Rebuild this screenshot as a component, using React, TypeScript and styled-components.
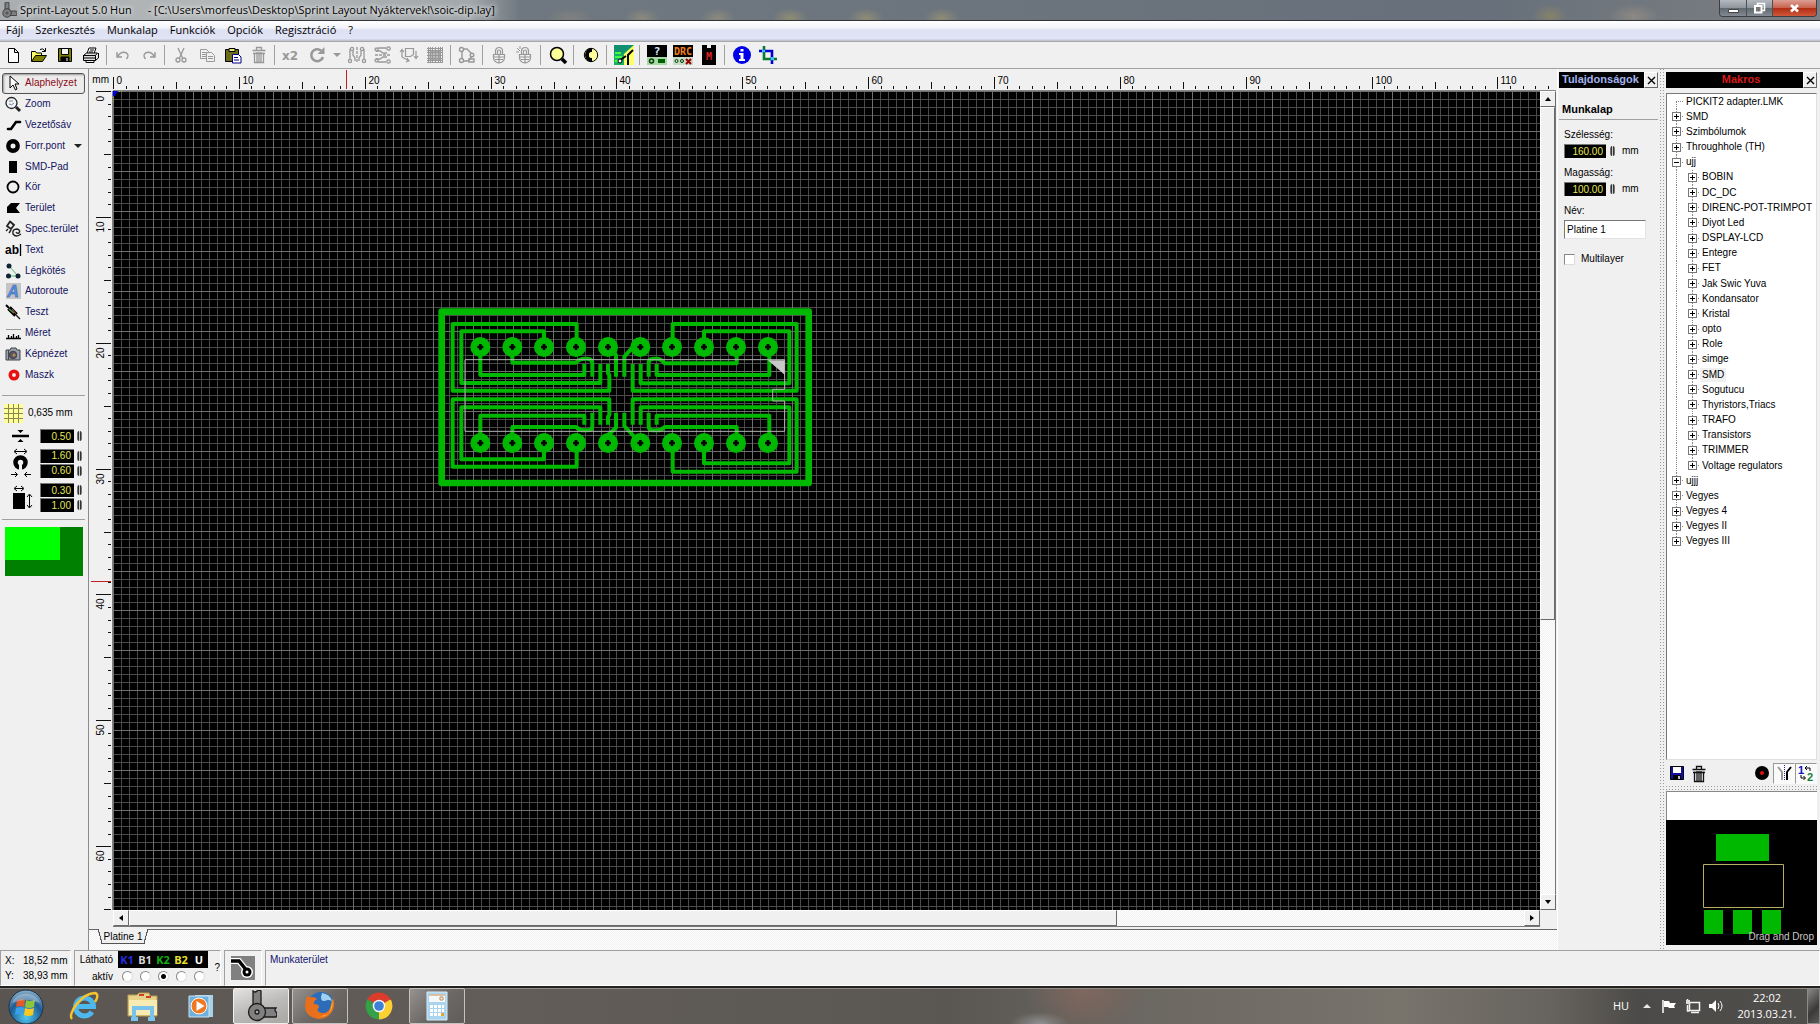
import React, { ReactNode, useState } from "react";
import styled, { createGlobalStyle, css } from "styled-components";

const ARIAL = '"Liberation Sans", sans-serif';
const SEGOE = '"Open Sans", sans-serif';

const FACE = "#f0f0f0";
const GREEN = "#00b800";
const DIM = "#989898";

const Global = createGlobalStyle`
  * { box-sizing: border-box; }
  html, body, #root { height: 100%; }
  body { margin: 0; overflow: hidden; background: ${FACE}; }
  button, input { font: inherit; color: inherit; margin: 0; padding: 0; }
  button { background: none; border: 0; white-space: nowrap; }
  ul { list-style: none; margin: 0; padding: 0; }
`;

const Page = styled.div`
  height: 100vh;
  display: flex;
  flex-direction: column;
  background: ${FACE};
  color: #000;
  font: 10px/16px ${ARIAL};
`;

/* ---------- window frame ---------- */

const TitleBar = styled.header`
  flex: none;
  height: 21px;
  display: flex;
  align-items: center;
  padding-left: 1px;
  border-bottom: 1px solid #30343a;
  background:
    radial-gradient(ellipse 24px 10px at 570px 18px, #80817f, transparent),
    radial-gradient(ellipse 18px 10px at 642px 18px, #8b8a7c, transparent),
    radial-gradient(ellipse 18px 10px at 718px 18px, #8b8a7c, transparent),
    radial-gradient(ellipse 18px 10px at 790px 18px, #8f8c74, transparent),
    radial-gradient(ellipse 18px 10px at 866px 18px, #8f8c74, transparent),
    radial-gradient(ellipse 18px 10px at 942px 18px, #8f8c74, transparent),
    radial-gradient(ellipse 18px 12px at 1550px 16px, #86836a, transparent),
    radial-gradient(ellipse 26px 12px at 1634px 16px, #8d8984, transparent),
    linear-gradient(90deg, #a9adaf 0, #b3b7b8 200px, #a2a8ab 470px, #6f7880 520px, #68717b 1500px, #7d7f82 1820px);
  font: 11px/16px ${SEGOE};
`;
const TitleText = styled.h1`
  flex: 1;
  display: flex;
  gap: 16px;
  margin: 0 0 0 3px;
  font: inherit;
  white-space: pre;
  text-shadow: 0 0 6px #fff, 0 0 4px #e8e8e8;
`;
const WindowButtons = styled.div`
  align-self: flex-start;
  display: flex;
  margin-right: 3px;
  border: 1px solid #3b3f45;
  border-top: 0;
  border-radius: 0 0 4px 4px;
  overflow: hidden;
`;
const WindowButton = styled.button<{ $close?: boolean }>`
  width: ${(p) => (p.$close ? 44 : 26)}px;
  height: 16px;
  display: grid;
  place-items: center;
  background: ${(p) =>
    p.$close
      ? "linear-gradient(#dba094, #c8604c 50%, #b02c12 51%, #d0583a)"
      : "linear-gradient(#b4b9bf, #8d949c 50%, #5f676f 51%, #838a91)"};
  & + & { border-left: 1px solid #4c5056; }
`;

const MenuBar = styled.nav`
  flex: none;
  height: 20px;
  display: flex;
  align-items: center;
  gap: 12px;
  padding: 0 0 2px 6px;
  background: linear-gradient(#fff, #f2f4fb 35%, #dee1f3 45%, #e0e4f5 88%, #b9bcc9);
  font: 11px/16px ${SEGOE};
`;

const ToolBar = styled.div`
  flex: none;
  height: 28px;
  display: flex;
  align-items: center;
  border-bottom: 1px solid #a0a0a0;
  border-top: 1px solid #a8a8a8;
`;
const ToolButton = styled.button<{ $w?: number }>`
  width: ${(p) => p.$w ?? 26}px;
  height: 24px;
  display: grid;
  place-items: center;
`;
const ToolSep = styled.span<{ $wide?: boolean }>`
  width: ${(p) => (p.$wide ? 7 : 6)}px;
  height: 20px;
  background: linear-gradient(#a0a0a0, #a0a0a0) 2px 0 / 1px 100% no-repeat;
`;

/* ---------- left column ---------- */

const Main = styled.main`
  flex: 1;
  min-height: 0;
  display: flex;
`;
const LeftPanel = styled.aside`
  flex: none;
  width: 89px;
  padding: 4px 3px 0 2px;
  border-right: 1px solid #8c8c8c;
`;
const ToolList = styled.div`
  height: 312px;
  display: grid;
  grid-auto-rows: 1fr;
`;
const ToolItem = styled.button<{ $on?: boolean }>`
  display: flex;
  align-items: center;
  gap: 3px;
  padding-left: 1px;
  color: ${(p) => (p.$on ? "#8c0a14" : "#12125e")};
  text-align: left;
  border: 1px solid transparent;
  border-radius: 3px;
  ${(p) =>
    p.$on &&
    css`
      border-color: #555;
      background: #ececec;
      box-shadow: inset 1px 1px 2px #999;
    `}
`;
const Divider = styled.hr<{ $tight?: boolean }>`
  margin: ${(p) => (p.$tight ? 7 : 10)}px 0 7px;
  border: 0;
  border-top: 1px solid #a0a0a0;
`;
const GridSize = styled.div`
  display: flex;
  align-items: center;
  gap: 5px;
  height: 20px;
  padding-left: 2px;
`;
const Sizes = styled.div`
  display: grid;
  gap: 5px;
  margin-top: 6px;
`;
const SizeGroup = styled.div`
  display: grid;
  grid-template-columns: 38px 1fr;
  align-items: center;
`;
const SizeFields = styled.div`
  display: grid;
  gap: 1px;
`;
const FieldRow = styled.label`
  display: flex;
  align-items: center;
  gap: 3px;
`;
const NumberField = styled.input<{ $w: number }>`
  width: ${(p) => p.$w}px;
  height: 14px;
  padding-right: 3px;
  border: 0;
  border-top: 1px solid #777;
  border-left: 1px solid #777;
  background: #000;
  color: #e6e65a;
  text-align: right;
`;
const Spin = styled.button`
  width: 5px;
  height: 10px;
  border-radius: 3px;
  background: linear-gradient(90deg, #999, #222 35%, #ccc 50%, #222 65%, #999);
`;
const Preview = styled.div`
  height: 49px;
  margin: 0 2px 0 3px;
  background: linear-gradient(#00ff00, #00ff00) 0 0 / 55px 33px no-repeat #008000;
`;

/* ---------- work area ---------- */

const WorkColumn = styled.section`
  flex: 1;
  min-width: 0;
  display: flex;
  flex-direction: column;
`;
const WorkGrid = styled.div`
  flex: 1;
  min-height: 0;
  display: grid;
  grid-template-columns: 24px minmax(0, 1fr) 16px;
  grid-template-rows: 22px minmax(0, 1fr) 17px;
  padding-right: 1px;
`;
const Unit = styled.span`
  line-height: 22px;
  text-align: right;
  padding-right: 4px;
`;
const TopRuler = styled.svg`
  grid-column: 2 / 4;
  width: 100%;
  height: 22px;
  display: block;
  border-bottom: 1px solid #888;
`;
const SideRuler = styled.svg`
  width: 24px;
  height: 100%;
  display: block;
  border-right: 1px solid #808088;
`;
const Board = styled.svg`
  width: 100%;
  height: 100%;
  display: block;
  background: #000;
`;
const hatch = css`
  background: repeating-conic-gradient(#fff 0 25%, ${FACE} 0 50%) 0 0 / 2px 2px;
`;
const ScrollBar = styled.div<{ $horizontal?: boolean }>`
  display: flex;
  flex-direction: ${(p) => (p.$horizontal ? "row" : "column")};
  ${hatch}
  ${(p) =>
    p.$horizontal
      ? css`
          grid-column: 2;
          border-bottom: 1px solid #777;
        `
      : css`
          border-right: 1px solid #777;
        `}
`;
const raised = css`
  background: ${FACE};
  border: 1px solid #fff;
  border-right-color: #696969;
  border-bottom-color: #696969;
`;
const ScrollButton = styled.button`
  flex: none;
  width: 16px;
  height: 16px;
  display: grid;
  place-items: center;
  ${raised}
`;
const Thumb = styled.div<{ $grow: number }>`
  flex: ${(p) => p.$grow} 1 0;
  ${raised}
`;
const Rest = styled.div<{ $grow: number }>`
  flex: ${(p) => p.$grow} 1 0;
`;
const TabStrip = styled.div`
  flex: none;
  height: 21px;
  margin-top: 2px;
  display: flex;
  ${hatch}
`;
const TabLine = styled.span<{ $grow?: boolean }>`
  width: 9px;
  flex: ${(p) => (p.$grow ? "1" : "none")};
  border-top: 1px solid #666;
`;
const Tab = styled.button`
  position: relative;
  height: 15px;
  width: 50px;
  background: ${FACE};
  border-bottom: 1px solid #555;
  line-height: 15px;
  &::before, &::after {
    content: "";
    position: absolute;
    top: 0;
    width: 4px;
    height: 15px;
  }
  &::before { left: 0; background: linear-gradient(75deg, #f7f7f7 44%, #555 45% 58%, ${FACE} 60%); }
  &::after { right: 0; background: linear-gradient(-75deg, #f7f7f7 44%, #555 45% 58%, ${FACE} 60%); }
`;

/* ---------- right panels ---------- */

const Properties = styled.aside`
  flex: none;
  width: 103px;
  padding: 3px 2px 0 1px;
  border-left: 1px solid #fff;
`;
const PanelHead = styled.div`
  display: flex;
  height: 16px;
`;
const PanelTitle = styled.h2<{ $color: string; $center?: boolean }>`
  flex: 1;
  margin: 0;
  padding-left: ${(p) => (p.$center ? 13 : 3)}px;
  background: #000;
  color: ${(p) => p.$color};
  font: bold 11px/15px ${ARIAL};
  text-align: ${(p) => (p.$center ? "center" : "left")};
`;
const CloseButton = styled.button`
  width: 14px;
  display: grid;
  place-items: center;
  ${raised}
`;
const Section = styled.h3`
  margin: 13px 0 7px;
  padding: 0 0 1px 3px;
  border-bottom: 1px solid #a0a0a0;
  font: bold 11px/17px ${ARIAL};
`;
const Prop = styled.div`
  display: flex;
  flex-direction: column;
  padding-left: 5px;
  margin-bottom: 6px;
`;
const PropLine = styled.div`
  display: flex;
  align-items: center;
  gap: 4px;
  height: 16px;
`;
const Mm = styled.span`
  padding-left: 3px;
`;
const NameField = styled.input`
  width: 82px;
  height: 19px;
  margin-top: 1px;
  padding-left: 2px;
  border: 1px solid #777;
  border-right-color: #e4e4e4;
  border-bottom-color: #e4e4e4;
  background: #fff;
`;
const CheckLabel = styled.label`
  display: flex;
  align-items: center;
  gap: 6px;
  margin: 12px 0 0 5px;
`;
const Check = styled.input`
  appearance: none;
  width: 11px;
  height: 11px;
  border: 1px solid #888;
  border-right-color: #ddd;
  border-bottom-color: #ddd;
  background: #fff;
`;
const dots = "conic-gradient(at 1px 1px, transparent 75%, #9a9a9a 75%)";
const Grip = styled.div`
  flex: none;
  width: 5px;
  margin-right: 1px;
  background: ${dots} 0 0 / 3px 3px;
`;
const Macros = styled.aside`
  flex: none;
  width: 154px;
  padding: 3px 3px 0 0;
  display: flex;
  flex-direction: column;
`;
const TreeBox = styled.div`
  flex: 1;
  min-height: 0;
  margin-top: 5px;
  padding-left: 1px;
  overflow: hidden;
  background: #fff;
  border: 1px solid #777;
  border-right-color: #e0e0e0;
  border-bottom-color: #e0e0e0;
`;
const Tree = styled.ul`
  height: 455px;
  display: grid;
  grid-auto-rows: 1fr;
`;
const TreeRow = styled.li`
  display: flex;
  align-items: center;
  min-height: 0;
  white-space: nowrap;
`;
const vLine = "repeating-linear-gradient(#888 0 1px, transparent 1px 2px)";
const hLine = "repeating-linear-gradient(90deg, #888 0 1px, transparent 1px 2px)";
const Cell = styled.span<{ $v: string; $h?: boolean }>`
  width: 16px;
  height: 100%;
  display: grid;
  place-items: center;
  background:
    ${vLine} 8px ${(p) => (p.$v === "bottom" ? "100%" : "0")} / 1px
      ${(p) => (p.$v === "full" ? "100%" : "50%")} no-repeat,
    ${hLine} 8px 50% / ${(p) => (p.$h ? 8 : 0)}px 1px no-repeat;
`;
const Expander = styled.button`
  width: 9px;
  height: 9px;
  display: grid;
  place-items: center;
  border: 1px solid #777;
  background: #fff;
`;
const TreeName = styled.span<{ $marked?: boolean }>`
  padding: 0 2px;
  line-height: 14px;
  background: ${(p) => (p.$marked ? "#f0f0f0" : "transparent")};
`;
const MacroTools = styled.div`
  height: 26px;
  display: flex;
  align-items: center;
`;
const MacroButton = styled.button<{ $down?: boolean }>`
  width: 22px;
  height: 21px;
  display: grid;
  place-items: center;
  border: 1px solid ${(p) => (p.$down ? "#999" : "transparent")};
  border-right-color: transparent;
  border-bottom-color: transparent;
  background: ${(p) => (p.$down ? "#fafafa" : "none")};
`;
const Spacer = styled.span`
  flex: 1;
`;
const HGrip = styled.div`
  height: 5px;
  background: ${dots} 0 0 / 3px 3px;
`;
const MacroInfo = styled.div`
  height: 29px;
  background: #fff;
  border-top: 1px solid #888;
  border-left: 1px solid #888;
`;
const MacroView = styled.div`
  position: relative;
  height: 125px;
  margin-bottom: 5px;
  background: #000;
  overflow: hidden;
`;
const DragHint = styled.span`
  position: absolute;
  right: 3px;
  bottom: 0;
  color: #c8c8c8;
`;

/* ---------- status bar ---------- */

const Status = styled.footer`
  flex: none;
  height: 36px;
  display: flex;
  gap: 3px;
  background: ${FACE};
`;
const StatusPane = styled.div<{ $w?: number }>`
  ${(p) => (p.$w ? `flex: none; width: ${p.$w}px;` : "flex: 1;")}
  display: flex;
  align-items: center;
  border: 1px solid #fff;
  border-top-color: #a0a0a0;
  border-left-color: #a0a0a0;
`;
const Coords = styled.dl`
  display: grid;
  grid-template-columns: 18px 1fr;
  margin: 0 0 0 4px;
  line-height: 15px;
  white-space: nowrap;
  dd { margin: 0; }
`;
const Layers = styled.div`
  display: grid;
  grid-template-columns: 43px repeat(5, 18px) 12px;
  grid-template-rows: 17px 17px;
  align-items: center;
`;
const LayersLabel = styled.span`
  padding-right: 5px;
  text-align: right;
`;
const LayerButton = styled.button<{ $c: string }>`
  height: 17px;
  background: #000;
  color: ${(p) => p.$c};
  font: bold 11px/16px ${SEGOE};
`;
const Radio = styled.input`
  appearance: none;
  justify-self: center;
  width: 11px;
  height: 11px;
  border: 1px solid #888;
  border-right-color: #ddd;
  border-bottom-color: #ddd;
  border-radius: 50%;
  background: #fff;
  &:checked { background: radial-gradient(circle, #000 2px, #fff 3px); }
`;
const Help = styled.button`
  grid-column: 7;
  grid-row: 1 / 3;
  text-align: right;
`;
const Hint = styled.p`
  align-self: flex-start;
  margin: 1px 0 0 4px;
  color: #14146e;
`;

/* ---------- desktop task bar ---------- */

const TaskBar = styled.div`
  flex: none;
  height: 38px;
  display: flex;
  align-items: center;
  border-top: 2px solid #24211f;
  background:
    radial-gradient(ellipse 60px 46px at 1085px 0, #80675e, transparent),
    radial-gradient(ellipse 30px 12px at 1040px 36px, #8f9192, transparent),
    linear-gradient(90deg, #5a5550, #625d58 500px, #5a5753 950px, #6c6862 1150px, #78736b 1400px, #67645f 1550px, #4c4a48 1640px, #514f4c);
  color: #fff;
  font: 11px/16px ${SEGOE};
  box-shadow: inset 0 1px #8e8b87;
`;
const TaskButton = styled.button<{ $w: number; $open?: boolean; $active?: boolean }>`
  width: ${(p) => p.$w}px;
  height: 36px;
  margin-right: ${(p) => (p.$active ? 3 : 0)}px;
  display: grid;
  place-items: center;
  border: 1px solid transparent;
  border-radius: 2px;
  ${(p) =>
    p.$open &&
    css`
      border-color: #c4c2bf;
      background: linear-gradient(135deg, #95928f, #6c6966 50%, #5f5c59);
    `}
  ${(p) =>
    p.$active &&
    css`
      border-color: #efefef;
      background: linear-gradient(160deg, #e4e3e2, #bdbbb9 50%, #a9a7a4);
    `}
`;
const Tray = styled.div`
  margin-left: auto;
  display: flex;
  align-items: center;
  height: 36px;
`;
const TrayButton = styled.button<{ $w: number }>`
  width: ${(p) => p.$w}px;
  display: grid;
  place-items: center;
`;
const Clock = styled.time`
  width: 80px;
  text-align: center;
`;
const ShowDesktop = styled.button`
  width: 13px;
  height: 36px;
  border: 1px solid #8d8b89;
  background: linear-gradient(135deg, #8a8886, #3b3a38 60%, #5c5a58);
`;

/* ---------- drawings ---------- */

const Svg = ({ s = 20, w, h, children }: { s?: number; w?: number; h?: number; children: ReactNode }) => (
  <svg width={w ?? s} height={h ?? s} viewBox={`0 0 ${w ?? s} ${h ?? s}`} fill="none" aria-hidden="true">
    {children}
  </svg>
);

const Trash = ({ c }: { c: string }) => (
  <g stroke={c} strokeWidth="1.3">
    <path d="M3.500 5.500h13M7.500 5V2.500h5v2.500M5.500 7.500v10h9v-10M4 8.500h12" />
    <path d="M8 7v10M10 7v10M12 7v10" />
  </g>
);
const Lock = () => (
  <g stroke={DIM} strokeWidth="1.2">
    <path d="M6.500 9V6a3.500 3.500 0 0 1 7 0v3M8.500 9V6.500a1.500 1.500 0 0 1 3 0V9" />
    <path d="M4.500 9.500h11v3a5.500 5.500 0 0 1-11 0zM5 12h10M6 14.500h8M10 10v8" />
  </g>
);

const toolIcons: Record<string, ReactNode> = {
  new: <path d="M5.500 3.500h6l4 4v10h-10zM11.500 3.500v4h4" fill="#fff" stroke="#000" />,
  open: (
    <g stroke="#000">
      <path d="M2.500 16V6.500h4l1 1.500h5v3" fill="#ffff66" />
      <path d="M2.500 16.500l4-6h11l-4 6z" fill="#808000" />
      <path d="M11 4.500q3-2 5 1.500M16.500 3v3.500H13" />
    </g>
  ),
  save: (
    <g stroke="#000">
      <path d="M3.500 3.500h13v13h-13z" fill="#808000" />
      <path d="M6.500 3.500h7v6h-7z" fill="#f4f4f4" />
      <path d="M6 12h8v4.500H6z" fill="#000" />
      <path d="M12 13v3" stroke="#fff" />
    </g>
  ),
  print: (
    <g stroke="#000">
      <path d="M6 8.500l2-5.500h7l-2 5.500" fill="#fff" />
      <path d="M2.500 10.500l3-2.500h11l-2 2.500zM2.500 10.500h12v5h-12zM14.500 15.500l3-2.500V8" fill="#ddd" />
      <path d="M3 13h11M5 16v1.500h8V16M9 5h4M8 7h4" />
    </g>
  ),
  undo: <path d="M4 7v5h5M4.500 11.500q4-6 9-3.500 3 2.500 0 6" stroke={DIM} strokeWidth="1.400" />,
  redo: <path d="M16 7v5h-5M15.500 11.500q-4-6-9-3.500-3 2.500 0 6" stroke={DIM} strokeWidth="1.400" />,
  cut: (
    <g stroke={DIM} strokeWidth="1.300">
      <path d="M7 3l4.500 10M13 3L8.500 13" />
      <circle cx="7" cy="15" r="2" />
      <circle cx="13" cy="15" r="2" />
    </g>
  ),
  copy: (
    <g stroke={DIM}>
      <path d="M3.500 4.500h6l2 2v7h-8z" fill={FACE} />
      <path d="M9.500 7.500h5l3 3v6h-8z" fill={FACE} />
      <path d="M5 7.500h4M5 9.500h4M5 11.500h4M11 11.500h5M11 13.500h5" />
    </g>
  ),
  paste: (
    <g stroke="#000">
      <path d="M2.500 4.500h13v12h-13z" fill="#6b6b1e" />
      <path d="M6 3.500h6v3H6z" fill="#e8e87a" />
      <path d="M9.500 9.500h6l2.500 2.500v6H9.500z" fill="#fff" stroke="#000080" />
      <path d="M11 12.500h4M11 15h5" stroke="#000080" />
    </g>
  ),
  trash: <Trash c={DIM} />,
  x2: (
    <text x="1" y="15" fontFamily="DejaVu Sans" fontWeight="bold" fontSize="12" fill={DIM}>
      x2
    </text>
  ),
  rotate: (
    <g>
      <path d="M14 5.500A6 6 0 1 0 16 12" stroke={DIM} strokeWidth="2.600" />
      <path d="M17.500 2v7h-7z" fill={DIM} />
    </g>
  ),
  mirrorH: (
    <g stroke={DIM} strokeWidth="1.300">
      <path d="M10 2v16" strokeDasharray="3 1" />
      <path d="M3 4v4M3 8v7M6 6v4l2 3v3M17 4v4M17 8v7M14 6v4l-2 3v3" />
      <circle cx="3" cy="16" r="1.600" />
      <circle cx="17" cy="16" r="1.600" />
      <circle cx="5" cy="4" r="1.600" />
      <circle cx="15" cy="4" r="1.600" />
    </g>
  ),
  mirrorV: (
    <g stroke={DIM} strokeWidth="1.300">
      <path d="M2 10h16" strokeDasharray="3 1" />
      <path d="M5 3h8M3 6h4l3 2h4M5 17h8M3 14h4l3-2h4" />
      <circle cx="15.500" cy="3.500" r="1.700" />
      <circle cx="15.500" cy="16.500" r="1.700" />
      <circle cx="3.500" cy="4.500" r="1.500" />
      <circle cx="3.500" cy="15.500" r="1.500" />
    </g>
  ),
  swap: (
    <g stroke={DIM} strokeWidth="1.200">
      <path d="M6.500 3.500h8v6l-3 2h-5z" />
      <path d="M1 7l2-2.500L5 7M3 5v7l7 4M19 11l-2 2.500L15 11M17 13V6M8 13l2 3-3 1" />
    </g>
  ),
  raster: (
    <g stroke={DIM}>
      <path d="M2 3.500h16M2 5.500h16M2 7.500h16M2 10.500h16M2 13.500h16M2 15.500h16M2 17.500h16M3.500 2v16M5.500 2v16M7.500 2v16M10.500 2v16M13.500 2v16M15.500 2v16M17.500 2v16" />
      <path d="M5 6h10v9H5z" fill={DIM} fillOpacity=".6" />
    </g>
  ),
  net: (
    <g stroke={DIM} strokeWidth="1.400">
      <path d="M5 4h5l6 6-5 6H5M5 4v12" />
      <circle cx="4.500" cy="4.500" r="2" fill={FACE} />
      <circle cx="4.500" cy="15.500" r="2" fill={FACE} />
      <circle cx="15" cy="10" r="1.800" fill={FACE} />
      <path d="M12 14h5v3h-5z" />
    </g>
  ),
  lock: <Lock />,
  unlock: (
    <g>
      <Lock />
      <path d="M2 3l3 3M5 1v3M1 7h3" stroke={DIM} />
    </g>
  ),
  zoom: (
    <g stroke="#000">
      <circle cx="9" cy="9" r="6.500" fill="#ffff99" strokeWidth="1.500" />
      <path d="M14 14l4 4" strokeWidth="3.500" />
    </g>
  ),
  contrast: (
    <g>
      <circle cx="10" cy="10" r="6.700" fill="#ffff99" stroke="#000" strokeWidth="1" />
      <path d="M11 3a7 7 0 1 0 0 14v-4a3 3 0 0 1 0-6z" fill="#000" />
      <path d="M11 7a3 3 0 0 0 0 6z" fill="#ffff99" />
    </g>
  ),
  photo: (
    <g>
      <path d="M0 0h20v20H0z" fill="#18b060" />
      <path d="M0 0h20L8 9H0z" fill="#109070" />
      <path d="M10 20V9L20 0v20z" fill="#ffff66" />
      <path d="M1 8h6M1 12h7M1 16h5" stroke="#40ff40" strokeWidth="2" />
      <path d="M19 5l-5 5v10M5 16l7-5" stroke="#000" strokeWidth="2" />
      <circle cx="6" cy="16" r="2" fill="#fff" stroke="#000" />
    </g>
  ),
  test: (
    <g>
      <path d="M0 0h20v12H0z" fill="#000" />
      <path d="M0 12h20v8H0z" fill="#a8d8a8" />
      <text x="10" y="10" textAnchor="middle" fontFamily="DejaVu Sans Mono" fontWeight="bold" fontSize="11" fill="#d8ecff">?</text>
      <circle cx="4.500" cy="16" r="2" stroke="#004000" strokeWidth="1.500" />
      <path d="M11 14h7v4h-7z" fill="#006000" />
    </g>
  ),
  drc: (
    <g>
      <path d="M0 0h20v12H0z" fill="#000" />
      <path d="M0 12h20v8H0z" fill="#c8dcc8" />
      <text x="10" y="10" textAnchor="middle" fontFamily="DejaVu Sans Mono" fontWeight="bold" fontSize="10" fill="#f08020">DRC</text>
      <circle cx="3.500" cy="16" r="1.500" stroke="#004000" />
      <circle cx="9" cy="16" r="1.500" stroke="#004000" />
      <path d="M13 14l5 5M18 14l-5 5" stroke="#900" strokeWidth="2" />
    </g>
  ),
  macro: (
    <g>
      <path d="M3 0h5v3h4V0h5v20H3z" fill="#000" />
      <text x="10" y="15" textAnchor="middle" fontFamily="DejaVu Sans Mono" fontWeight="bold" fontSize="10" fill="#e02020">M</text>
    </g>
  ),
  info: (
    <g>
      <circle cx="10" cy="10" r="9" fill="#0000e8" />
      <path d="M8.500 4h3v2.500h-3zM7 8h4.500v6H13v2H7v-2h1.500v-4H7z" fill="#fff" />
    </g>
  ),
  crop: (
    <g strokeWidth="2.600">
      <path d="M6 1v13h13" stroke="#0a7a2a" />
      <path d="M1 6h13v13" stroke="#0000d0" />
      <path d="M4 6h3M13 14h3M14 12v3" stroke="#30c8f0" />
    </g>
  ),
};

type Tool = [string, string] | "|" | "||" | "v";
const tools: Tool[] = [
  ["new", "Új"], ["open", "Megnyitás"], ["save", "Mentés"], ["print", "Nyomtatás"], "|",
  ["undo", "Visszavonás"], ["redo", "Ismét"], "|",
  ["cut", "Kivágás"], ["copy", "Másolás"], ["paste", "Beillesztés"], ["trash", "Törlés"], "|",
  ["x2", "Duplikálás"], ["rotate", "Forgatás"], "v",
  ["mirrorH", "Vízszintes tükrözés"], ["mirrorV", "Függőleges tükrözés"], ["swap", "Oldalcsere"], ["raster", "Raszter"], "|",
  ["net", "Kapcsolat"], "|", ["lock", "Zárolás"], ["unlock", "Feloldás"], "||",
  ["zoom", "Zoom"], "||", ["contrast", "Kontraszt"], "||", ["photo", "Fotónézet"], "||",
  ["test", "Teszt"], ["drc", "DRC"], ["macro", "Makrók"], "||", ["info", "Információ"], ["crop", "Kivágat"],
];

const modes: { name: string; icon: ReactNode }[] = [
  { name: "Alaphelyzet", icon: <path d="M6 2v12l3-3 2.500 5 1.500-1-2-5h4z" fill="#fff" stroke="#000" /> },
  {
    name: "Zoom",
    icon: (
      <g stroke="#222">
        <circle cx="7.500" cy="8" r="5.500" fill="#eef4fa" strokeWidth="1.300" />
        <path d="M5 6h4M5 9q3 2 5-1" stroke="#888" />
        <path d="M12 12l4 4" strokeWidth="3" />
      </g>
    ),
  },
  { name: "Vezetősáv", icon: <path d="M4 13h3l5-7h4" stroke="#000" strokeWidth="2.600" strokeLinecap="round" /> },
  { name: "Forr.pont", icon: <circle cx="9" cy="9" r="4.700" stroke="#000" strokeWidth="4.400" /> },
  { name: "SMD-Pad", icon: <path d="M5 3h8v12H5z" fill="#000" /> },
  { name: "Kör", icon: <circle cx="9" cy="9" r="5.500" stroke="#000" strokeWidth="1.800" /> },
  { name: "Terület", icon: <path d="M3 14V8l4-4h9l-4 5 4 5z" fill="#000" /> },
  {
    name: "Spec.terület",
    icon: (
      <g stroke="#222" strokeWidth="1.800">
        <path d="M6 1.500l4 3.500-3 4-4-3z" />
        <path d="M17 14q-5 4-8 0-1-5 4-5 4 1 2 4-2 1-3-1M4 9l-2 2M7 10l-2 3" strokeWidth="1.400" />
      </g>
    ),
  },
  {
    name: "Text",
    icon: (
      <g>
        <text x="1" y="13" fontFamily="Liberation Sans" fontWeight="bold" fontSize="12" fill="#000">ab</text>
        <path d="M16.500 3v12" stroke="#000" strokeWidth="1.300" />
      </g>
    ),
  },
  {
    name: "Légkötés",
    icon: (
      <g>
        <path d="M5 4l9 10M5 14h9" stroke="#40c060" />
        <circle cx="5" cy="4" r="2.500" fill="#123" />
        <circle cx="4.500" cy="14" r="2.500" fill="#123" />
        <circle cx="14" cy="14" r="2.500" fill="#123" />
      </g>
    ),
  },
  {
    name: "Autoroute",
    icon: (
      <g>
        <path d="M2 1h15v16H2z" fill="#c4c4c4" />
        <text x="9" y="15" textAnchor="middle" fontFamily="Liberation Sans" fontWeight="bold" fontStyle="italic" fontSize="16" fill="#5b90e0" stroke="#2b5cae" strokeWidth=".5">A</text>
      </g>
    ),
  },
  {
    name: "Teszt",
    icon: (
      <g>
        <path d="M2 2l3 3" stroke="#000" strokeWidth="2" />
        <path d="M5 5l7 7" stroke="#000" strokeWidth="5" />
        <path d="M5 6l5 4" stroke="#50a050" strokeWidth="1.500" />
        <path d="M8 6l4 5" stroke="#c05050" />
        <path d="M12 12l4 4" stroke="#222" strokeWidth="1.500" />
      </g>
    ),
  },
  { name: "Méret", icon: <g><path d="M2 5.500h15" stroke="#999" /><path d="M2 14.500h15M4.500 11v3M7.500 12v3M9.500 10v4M12.500 12v3M14.500 11v3" stroke="#000" strokeWidth="1.300" /></g> },
  {
    name: "Képnézet",
    icon: (
      <g stroke="#444">
        <path d="M2 5h4l1-2h5l1 2h3v10H2z" fill="#9aa0b0" />
        <circle cx="9" cy="10" r="3.800" fill="#556" />
        <circle cx="10" cy="10" r="1.500" fill="#c09050" stroke="none" />
        <path d="M4.500 5v10" />
      </g>
    ),
  },
  { name: "Maszk", icon: <circle cx="10" cy="9" r="3.700" stroke="#e81010" strokeWidth="3.600" /> },
];

const MM = 12.586;
const range = (n: number) => Array.from({ length: n }, (_, i) => i);
const at = (i: number) => Math.round(i * MM) + 0.5;

const GRID = 7.992;
const snap = (i: number) => Math.round(i * GRID) + 0.5;
const cols = (n: number, keep: (i: number) => boolean) =>
  range(n).filter(keep).map((i) => `M${snap(i)} 0V2400`).join("");
const rows = (n: number, keep: (i: number) => boolean) =>
  range(n).filter(keep).map((i) => `M0 ${snap(i)}H4000`).join("");
const minor = (i: number) => i % 5 !== 0;
const major = (i: number) => i % 5 === 0;

const padX = [151, 247, 342, 438, 534, 631, 726, 822, 918, 1014];

const leftTraces = [
  "M440 141V72H68V272H538V225L534 220V192",
  "M342 141V94H94V249H511V192",
  "M151 141V225H463V192",
  "M247 141V188H438Q448 176 464 176H472Q487 176 487 192V230",
  "M534 141L558 165V230",
  "M583 230V170L605 145H631",
  "M440 429V500H68V298H538V345L534 350V374",
  "M342 429V478H94V322H511V374",
  "M151 429V347H463V374",
  "M247 429V381H438Q448 391 464 391H472Q487 391 487 377V338",
  "M534 429V405L558 383V338",
  "M583 338V378L608 405L631 429",
];
const rightTraces = [
  "M158 141V72H530V272H38V192",
  "M252 141V94H508V250H62V192",
  "M448 141V225H110V192",
  "M350 141V190H134Q124 176 110 176H100Q86 176 86 190V230",
  "M158 429V515H530V298H38V374",
  "M252 429V490H508V322H62V374",
  "M448 429V347H110V374",
  "M350 429V381H134Q124 391 110 391H100Q86 391 86 377V338",
];

const Circuit = () => (
  <g transform="translate(317 209) scale(0.33333)">
    <g stroke={GREEN} strokeWidth="12" fill="none" strokeLinejoin="round">
      <rect x="35" y="35" width="1101" height="514" strokeWidth="20" />
      {leftTraces.map((d) => <path key={d} d={d} />)}
      <g transform="translate(570 0)">{rightTraces.map((d) => <path key={d} d={d} />)}</g>
    </g>
    {padX.map((x) =>
      [141, 429].map((y) => (
        <g key={`${x}-${y}`}>
          <circle cx={x} cy={y} r="30" fill={GREEN} />
          <path d={`M${x - 4} ${y - 9}h8v5h5v8h-5v5h-8v-5h-5v-8h5z`} fill="#000" />
        </g>
      ))
    )}
    <path d="M105 179H1064V268H1028V303H1064V394H105Z" stroke="#b4b4b4" strokeWidth="3" fill="none" />
    <path d="M1014 181H1064V224Z" fill="#c8c8c8" />
  </g>
);

/* ---------- tree data ---------- */

type Node = { name: string; level: 0 | 1; kind: "leaf" | "plus" | "minus" };
const root = (name: string): Node => ({ name, level: 0, kind: "plus" });
const nodes: Node[] = [
  { name: "PICKIT2 adapter.LMK", level: 0, kind: "leaf" },
  root("SMD"), root("Szimbólumok"), root("Throughhole (TH)"),
  { name: "ujj", level: 0, kind: "minus" },
  ...[
    "BOBIN", "DC_DC", "DIRENC-POT-TRIMPOT", "Diyot Led", "DSPLAY-LCD", "Entegre", "FET", "Jak Swic Yuva",
    "Kondansator", "Kristal", "opto", "Role", "simge", "SMD", "Sogutucu", "Thyristors,Triacs", "TRAFO",
    "Transistors", "TRIMMER", "Voltage regulators",
  ].map((name): Node => ({ name, level: 1, kind: "plus" })),
  root("ujjj"), root("Vegyes"), root("Vegyes 4"), root("Vegyes II"), root("Vegyes III"),
];

const TreeView = () => (
  <Tree>
    {nodes.map((n, i) => {
      const v = i === 0 ? "bottom" : i === nodes.length - 1 ? "top" : "full";
      const box = n.kind !== "leaf" && (
        <Expander aria-label={n.name}>
          <Svg s={7}>
            <path d={n.kind === "plus" ? "M1 3.500h5M3.500 1v5" : "M1 3.500h5"} stroke="#000" />
          </Svg>
        </Expander>
      );
      return (
        <TreeRow key={i}>
          {n.level === 1 && <Cell $v="full" />}
          <Cell $v={n.level ? (n.name === "Voltage regulators" ? "top" : "full") : v} $h>{box}</Cell>
          <TreeName $marked={n.level === 1 && n.name === "SMD"}>{n.name}</TreeName>
        </TreeRow>
      );
    })}
  </Tree>
);

const Arrow = ({ d }: { d: string }) => <Svg s={8}><path d={d} fill="#000" /></Svg>;
const CloseMark = () => <Svg s={9}><path d="M1 1l7 7M8 1L1 8" stroke="#000" strokeWidth="1.400" /></Svg>;

const Field = ({ label, value, w }: { label: string; value: string; w: number }) => (
  <FieldRow>
    <NumberField aria-label={label} defaultValue={value} $w={w} />
    <Spin aria-label={`${label} +/-`} />
  </FieldRow>
);

const layers: [string, string][] = [["K1", "#2a2ae0"], ["B1", "#d8d8d8"], ["K2", "#10b010"], ["B2", "#e8e030"], ["U", "#ffffff"]];

const AppMark = ({ size }: { size: number }) => (
  <svg width={size} height={size} viewBox="0 0 32 32" aria-hidden="true">
    <g fill="#808080" stroke="#1c1c1c" strokeWidth="1.300">
      <path d="M8 1q2 2 4 0t4 0v17H8z" />
      <path d="M16 18h15q-2 2 0 4t0 5H16z" />
      <circle cx="12" cy="22" r="8.500" />
      <circle cx="12" cy="22" r="2" fill="#aaa" />
    </g>
  </svg>
);

export default function App() {
  const [mode, setMode] = useState("Alaphelyzet");
  const [layer, setLayer] = useState("K2");
  return (
    <Page>
      <Global />
      <TitleBar>
        <AppMark size={16} />
        <TitleText>
          <span>Sprint-Layout 5.0 Hun</span>
          <span>- [C:\Users\morfeus\Desktop\Sprint Layout Nyáktervek!\soic-dip.lay]</span>
        </TitleText>
        <WindowButtons>
          <WindowButton aria-label="Kis méret"><Svg w={13} h={12}><path d="M1.500 7.500h10v3h-10z" fill="#fff" stroke="#444" /></Svg></WindowButton>
          <WindowButton aria-label="Előző méret"><Svg w={13} h={12}><path d="M4.500 1.500h7v7h-7z" stroke="#fff" strokeWidth="1.500" /><path d="M2 4h6.500v6.500H2z" fill="#777" stroke="#fff" strokeWidth="2" /></Svg></WindowButton>
          <WindowButton $close aria-label="Bezárás"><Svg w={13} h={12}><path d="M3 3l7 6.500M10 3L3 9.500" stroke="#fff" strokeWidth="2.600" /></Svg></WindowButton>
        </WindowButtons>
      </TitleBar>
      <MenuBar>
        {["Fájl", "Szerkesztés", "Munkalap", "Funkciók", "Opciók", "Regisztráció", "?"].map((m) => (
          <button key={m}>{m}</button>
        ))}
      </MenuBar>
      <ToolBar>
        {tools.map((t, i) =>
          t === "|" || t === "||" ? (
            <ToolSep key={i} $wide={t === "||"} />
          ) : t === "v" ? (
            <ToolButton key={i} $w={14} aria-label="Szög"><Svg s={8}><path d="M0 2h8L4 6z" fill={DIM} /></Svg></ToolButton>
          ) : (
            <ToolButton key={i} aria-label={t[1]}><Svg>{toolIcons[t[0]]}</Svg></ToolButton>
          )
        )}
      </ToolBar>

      <Main>
        <LeftPanel>
          <ToolList>
            {modes.map((m) => (
              <ToolItem key={m.name} $on={mode === m.name} onClick={() => setMode(m.name)}>
                <Svg s={18}>{m.icon}</Svg>
                {m.name}
                {m.name === "Forr.pont" && <Svg w={16} h={8}><path d="M6 2h8l-4 4z" fill="#222" /></Svg>}
              </ToolItem>
            ))}
          </ToolList>
          <Divider />
          <GridSize>
            <Svg s={19}>
              <path d="M0 0h19v19H0z" fill="#ffff99" />
              <path d="M0 4.500h19M0 9.500h19M0 14.500h19M4.500 0v19M9.500 0v19M14.500 0v19" stroke="#8c8850" />
            </Svg>
            0,635 mm
          </GridSize>
          <Sizes>
            <SizeGroup>
              <Svg w={34} h={14}><path d="M10 7h17" stroke="#000" strokeWidth="2.500" /><path d="M18.500 4l-3-3h6zM18.500 10l-3 3h6z" fill="#000" /></Svg>
              <Field label="Sávszélesség" value="0.50" w={34} />
            </SizeGroup>
            <SizeGroup>
              <Svg w={34} h={30}>
                <path d="M13 3.500h11M15 1l-3 2.500L15 6M22 1l3 2.500L22 6M9 26.500h6M29 26.500h-6M13 24l2.500 2.500L13 29M25 24l-2.500 2.500L25 29" stroke="#000" />
                <circle cx="18.500" cy="14.500" r="5" stroke="#000" strokeWidth="4.500" />
                <path d="M17 15h3v8h-3z" fill={FACE} />
              </Svg>
              <SizeFields>
                <Field label="Forrpont külső" value="1.60" w={34} />
                <Field label="Forrpont furat" value="0.60" w={34} />
              </SizeFields>
            </SizeGroup>
            <SizeGroup>
              <Svg w={34} h={26}>
                <path d="M13 3.500h8M15 1l-3 2.500L15 6M19 1l3 2.500L19 6M27.500 10v12M25 12l2.500-3 2.500 3M25 20l2.500 3 2.500-3" stroke="#000" />
                <path d="M11 8h12v16H11z" fill="#000" />
              </Svg>
              <SizeFields>
                <Field label="SMD szélesség" value="0.30" w={34} />
                <Field label="SMD magasság" value="1.00" w={34} />
              </SizeFields>
            </SizeGroup>
          </Sizes>
          <Divider $tight />
          <Preview />
        </LeftPanel>

        <WorkColumn>
          <WorkGrid>
            <Unit>mm</Unit>
            <TopRuler>
              {range(300).map((i) => (
                <path key={i} d={`M${at(i)} ${i % 10 === 0 ? 8 : i % 5 === 0 ? 13 : 17}V20`} stroke="#111" />
              ))}
              {range(30).map((i) => (
                <text key={i} x={at(i * 10) + 3} y="15">{i * 10}</text>
              ))}
              <path d="M233.500 1V20" stroke="#c02020" />
            </TopRuler>
            <SideRuler>
              {range(200).map((i) => (
                <path key={i} d={`M${i % 10 === 0 ? 7 : i % 5 === 0 ? 15 : 19} ${at(i)}H22`} stroke="#111" />
              ))}
              {range(20).map((i) => (
                <text key={i} transform={`translate(15 ${at(i * 10) + (i ? 15 : 10)}) rotate(-90)`}>{i * 10}</text>
              ))}
              <path d="M2 490.500H22" stroke="#c02020" />
            </SideRuler>
            <Board>
              <path d={cols(500, minor) + rows(300, minor)} stroke="#4a4a4a" />
              <path d={cols(500, major) + rows(300, major)} stroke="#6e6e6e" />
              <path d="M0 .500h9M.500 0v12" stroke="#b8a830" strokeDasharray="1 1" />
              <path d="M0 0h5L2 5H0z" fill="#0000e0" />
              <Circuit />
            </Board>
            <ScrollBar>
              <ScrollButton aria-label="Fel"><Arrow d="M1 6h6L4 2z" /></ScrollButton>
              <Thumb $grow={512} />
              <Rest $grow={275} />
              <ScrollButton aria-label="Le"><Arrow d="M1 2h6L4 6z" /></ScrollButton>
            </ScrollBar>
            <ScrollBar $horizontal>
              <ScrollButton aria-label="Balra"><Arrow d="M6 1v6L2 4z" /></ScrollButton>
              <Thumb $grow={987} />
              <Rest $grow={408} />
              <ScrollButton aria-label="Jobbra"><Arrow d="M2 1v6l4-3z" /></ScrollButton>
            </ScrollBar>
          </WorkGrid>
          <TabStrip>
            <TabLine />
            <Tab>Platine 1</Tab>
            <TabLine $grow />
          </TabStrip>
        </WorkColumn>

        <Properties>
          <PanelHead>
            <PanelTitle $color="#a4b4ee">Tulajdonságok</PanelTitle>
            <CloseButton aria-label="Bezárás"><CloseMark /></CloseButton>
          </PanelHead>
          <Section>Munkalap</Section>
          <Prop>
            <label htmlFor="sheet-w">Szélesség:</label>
            <PropLine>
              <NumberField id="sheet-w" defaultValue="160.00" $w={42} />
              <Spin aria-label="Szélesség +/-" />
              <Mm>mm</Mm>
            </PropLine>
          </Prop>
          <Prop>
            <label htmlFor="sheet-h">Magasság:</label>
            <PropLine>
              <NumberField id="sheet-h" defaultValue="100.00" $w={42} />
              <Spin aria-label="Magasság +/-" />
              <Mm>mm</Mm>
            </PropLine>
          </Prop>
          <Prop>
            <label htmlFor="sheet-name">Név:</label>
            <NameField id="sheet-name" defaultValue="Platine 1" />
          </Prop>
          <CheckLabel>
            <Check type="checkbox" />
            Multilayer
          </CheckLabel>
        </Properties>
        <Grip />
        <Macros>
          <PanelHead>
            <PanelTitle $color="#d81818" $center>Makros</PanelTitle>
            <CloseButton aria-label="Bezárás"><CloseMark /></CloseButton>
          </PanelHead>
          <TreeBox><TreeView /></TreeBox>
          <MacroTools>
            <MacroButton aria-label="Mentés">
              <Svg s={16}><path d="M1.500 1.500h13v13h-13z" fill="#1010a0" stroke="#000" /><path d="M4 2h8v6H4z" fill="#fff" /><path d="M4 10h8v5H4z" fill="#000" /><path d="M10 11v3" stroke="#fff" strokeWidth="1.500" /></Svg>
            </MacroButton>
            <MacroButton aria-label="Törlés"><Svg><Trash c="#111" /></Svg></MacroButton>
            <Spacer />
            <MacroButton aria-label="Felvétel"><Svg s={16}><circle cx="8" cy="8" r="7" fill="#000" /><circle cx="8" cy="8" r="2" fill="#e01010" /></Svg></MacroButton>
            <MacroButton $down aria-label="Tükrözés">
              <Svg s={18}><path d="M3 3l4 5v8" stroke="#999" strokeWidth="2" /><path d="M9.500 1v16" stroke="#2020a0" strokeDasharray="1 1" /><path d="M16 3l-4 5v8" stroke="#000" strokeWidth="2" /></Svg>
            </MacroButton>
            <MacroButton $down aria-label="Sorrend">
              <Svg s={18}>
                <text x="1" y="10" fontFamily="Liberation Sans" fontWeight="bold" fontSize="11" fill="#1010c0">1</text>
                <text x="10" y="17" fontFamily="Liberation Sans" fontWeight="bold" fontSize="11" fill="#108030">2</text>
                <path d="M13 7V4H8M10 2L8 4l2 2M4 11v3h4M6.500 12l2 2-2 2" stroke="#000" />
              </Svg>
            </MacroButton>
          </MacroTools>
          <HGrip />
          <MacroInfo />
          <MacroView>
            <svg width="150" height="125" viewBox="0 0 150 125" aria-hidden="true">
              <path d="M50 14h53v27H50zM38 90h19v24H38zM67 90h19v24H67zM96 90h19v24H96z" fill={GREEN} />
              <path d="M37.500 44.500h80v43h-80z" fill="none" stroke="#b4b060" />
            </svg>
            <DragHint>Drag and Drop</DragHint>
          </MacroView>
        </Macros>
      </Main>

      <Status>
        <StatusPane $w={71}>
          <Coords>
            <dt>X:</dt><dd>18,52 mm</dd>
            <dt>Y:</dt><dd>38,93 mm</dd>
          </Coords>
        </StatusPane>
        <StatusPane $w={147}>
          <Layers>
            <LayersLabel>Látható</LayersLabel>
            {layers.map(([n, c]) => <LayerButton key={n} $c={c}>{n}</LayerButton>)}
            <Help>?</Help>
            <LayersLabel>aktív</LayersLabel>
            {layers.map(([n]) => (
              <Radio key={n} type="radio" name="layer" aria-label={n} checked={layer === n} onChange={() => setLayer(n)} />
            ))}
          </Layers>
        </StatusPane>
        <StatusPane $w={38}>
          <ToolButton $w={36} aria-label="Vezetősáv">
            <Svg s={24}>
              <path d="M0 0h24v24H0z" fill="#808080" />
              <path d="M0 5h8l8 10" stroke="#fff" strokeWidth="6" />
              <circle cx="16" cy="16" r="6" fill="#fff" />
              <path d="M0 5h8l8 10" stroke="#000" strokeWidth="3.500" />
              <circle cx="16" cy="16" r="4.500" fill="#000" />
              <circle cx="16" cy="16" r="1.500" fill="#fff" />
            </Svg>
          </ToolButton>
        </StatusPane>
        <StatusPane><Hint>Munkaterület</Hint></StatusPane>
      </Status>

      <TaskBar>
        <TaskButton $w={51} aria-label="Start">
          <Svg s={36}>
            <defs>
              <radialGradient id="orb" cx=".5" cy=".8" r=".8"><stop offset="0" stopColor="#50c8f0" /><stop offset=".6" stopColor="#1f5c92" /><stop offset="1" stopColor="#8fb4cc" /></radialGradient>
            </defs>
            <circle cx="18" cy="18" r="17" fill="url(#orb)" stroke="#183048" />
            <path d="M9 12q4-3 8-1l-1 7q-4-2-8 0z" fill="#e8582a" />
            <path d="M18 11q4 2 9 0l-1 7q-5 2-9 0z" fill="#8cc63c" />
            <path d="M8 19q4-2 8 0l-1 7q-4-2-8 0z" fill="#3aa0e8" />
            <path d="M17 19q4 2 9 0l-1 7q-5 2-9 0z" fill="#fcc820" />
            <path d="M4 14a15 15 0 0 1 28 0q-14-6-28 0z" fill="#fff" fillOpacity=".3" />
          </Svg>
        </TaskButton>
        <TaskButton $w={66} aria-label="Internet Explorer">
          <Svg s={32}>
            <path d="M24 22a9 9 0 1 1 1.500-5.500H9" stroke="#4cb8ee" strokeWidth="5" />
            <path d="M4 29C-1 24 14 3 27 3c4 1 2 6 0 9" stroke="#f4c430" strokeWidth="2.400" />
          </Svg>
        </TaskButton>
        <TaskButton $w={52} aria-label="Windows Intéző">
          <Svg s={32}>
            <path d="M1 5h9l2-2h10l1 3h7v20H1z" fill="#e8d488" stroke="#b89c50" />
            <path d="M12 5h5M19 7h5" stroke="#d04030" strokeWidth="2" />
            <path d="M2 10h28v15H2z" fill="#f8ecb4" />
            <path d="M7 29V18h18v11M4 29h7M21 29h7" stroke="#78c4ec" strokeWidth="4" />
          </Svg>
        </TaskButton>
        <TaskButton $w={64} aria-label="Media Player">
          <Svg s={28}>
            <path d="M8 3h18v22H8z" fill="#a8d0e8" />
            <path d="M2 4h20v21H2z" fill="#70b0dc" stroke="#c8e4f4" />
            <circle cx="12" cy="14" r="8" fill="#f07820" stroke="#fff" />
            <path d="M9.500 9l8 5-8 5z" fill="#fff" />
          </Svg>
        </TaskButton>
        <TaskButton $w={56} $open $active aria-label="Sprint-Layout"><AppMark size={32} /></TaskButton>
        <TaskButton $w={56} $open aria-label="Firefox">
          <Svg s={32}>
            <circle cx="17" cy="15" r="13" fill="#2c6cb8" />
            <path d="M18 3q8 1 10 8-4-2-7 0-6 1-3-8z" fill="#9ed0f0" />
            <path d="M3 6q2 2 5 1 3 0 5 2-4 2-3 5 5 0 5 3-4 5 3 6 7 1 9-8l2-7q3 7-1 14-6 8-14 7Q2 27 1 17 1 11 3 6z" fill="#e8701c" />
            <path d="M28 9q2 8-3 14-8 6-15 1 8 5 14 0 4-5 4-15z" fill="#fcc030" />
          </Svg>
        </TaskButton>
        <TaskButton $w={61} aria-label="Chrome">
          <Svg s={28}>
            <path d="M14 14L2.300 7.300A13.500 13.500 0 0 1 25.700 7.300z" fill="#dc3c2c" />
            <path d="M14 14L25.700 7.300A13.500 13.500 0 0 1 14 27.500z" fill="#fcd030" />
            <path d="M14 14V27.500A13.500 13.500 0 0 1 2.300 7.300z" fill="#34a048" />
            <path d="M14 7.500H25.800" stroke="#dc3c2c" />
            <circle cx="14" cy="14" r="6.300" fill="#f4f4f4" />
            <circle cx="14" cy="14" r="4.800" fill="#3c80d8" />
          </Svg>
        </TaskButton>
        <TaskButton $w={56} $open aria-label="Számológép">
          <Svg w={22} h={30}>
            <path d="M1 1h20v28H1z" fill="#a8d4f0" stroke="#d8ecf8" />
            <path d="M3 3h16v8H3z" fill="#f4f8fa" />
            <path d="M3 4h16M14 6h3v3h-3z" stroke="#c08850" />
            <path d="M4 15.500h14M4 19.500h14M4 23.500h14" stroke="#fff" strokeWidth="3" strokeDasharray="3 1" />
            <path d="M15 23.500h3" stroke="#e8a030" strokeWidth="3" />
          </Svg>
        </TaskButton>
        <Tray>
          <TrayButton $w={32}>HU</TrayButton>
          <TrayButton $w={20} aria-label="Rejtett ikonok"><Svg s={8}><path d="M0 6h8L4 2z" fill="#e8e8e8" /></Svg></TrayButton>
          <TrayButton $w={24} aria-label="Műveletközpont"><Svg s={16}><path d="M2 2v13" stroke="#fff" strokeWidth="1.500" /><path d="M3 3h5l1 2h6l-2 3 1 2H8L7 9H3z" fill="#fff" /></Svg></TrayButton>
          <TrayButton $w={24} aria-label="Hálózat"><Svg s={16}><path d="M4.500 4.500h10v8h-10zM6 14.500h8M2.500 1v3M2.500 7v6h2" stroke="#f4f4f4" strokeWidth="1.500" /><path d="M1 2h4v4H1z" fill="#ddd" /></Svg></TrayButton>
          <TrayButton $w={22} aria-label="Hangerő"><Svg s={16}><path d="M1 6h3l4-4v12l-4-4H1z" fill="#fff" /><path d="M10 5q2 3 0 6M12 3q4 5 0 10" stroke="#fff" /></Svg></TrayButton>
          <Clock>22:02<br />2013.03.21.</Clock>
          <ShowDesktop aria-label="Asztal megjelenítése" />
        </Tray>
      </TaskBar>
    </Page>
  );
}
